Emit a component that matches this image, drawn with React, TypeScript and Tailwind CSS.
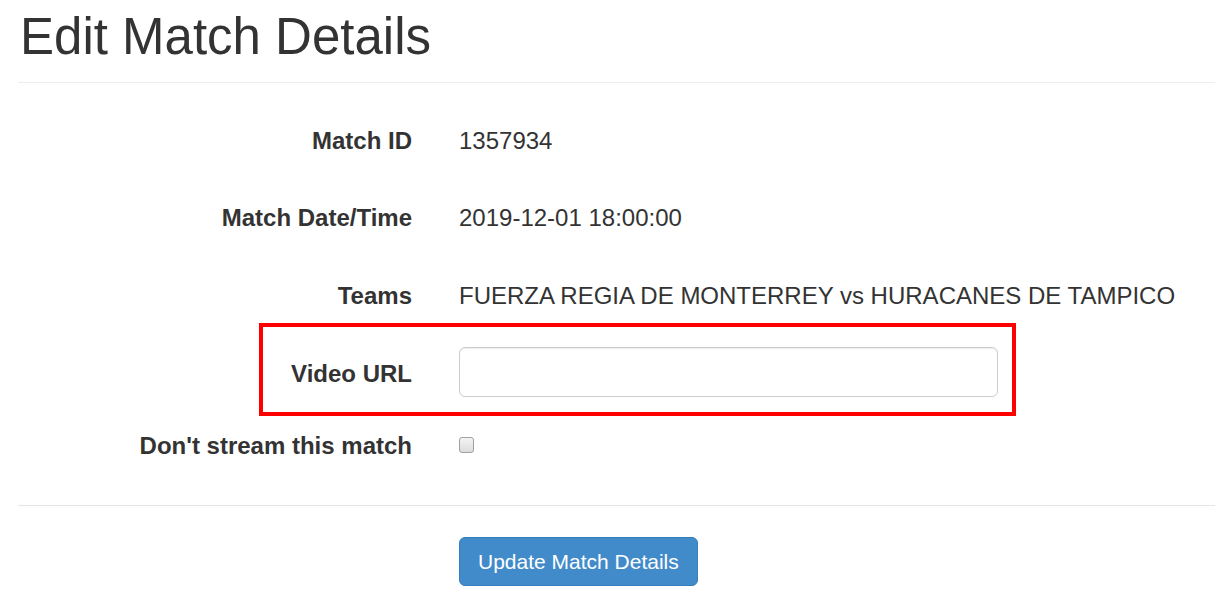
export default function App() {
  const rows = [
    { label: 'Match ID', value: '1357934', mt: 'mt-[33px]' },
    { label: 'Match Date/Time', value: '2019-12-01 18:00:00', mt: 'mt-[27px]' },
    { label: 'Teams', value: 'FUERZA REGIA DE MONTERREY vs HURACANES DE TAMPICO', mt: 'mt-[28px]' },
  ]

  return (
    <div className="min-h-screen bg-white pl-[18px] text-[#333] font-['Liberation_Sans',Arial,sans-serif] text-[24px] overflow-hidden">
      <div className="mt-[9px] pb-[17px] border-b border-[#eee]">
        <h1 className="pl-[2px] text-[51px] leading-[1.1] font-normal">Edit Match Details</h1>
      </div>

      {rows.map((row) => (
        <div key={row.label} className={`${row.mt} flex items-center h-[50px]`}>
          <div className="w-[394px] text-right font-bold">{row.label}</div>
          <div className="ml-[47px]">{row.value}</div>
        </div>
      ))}

      <div className="relative mt-[26px] flex items-center h-[50px]">
        <div className="absolute left-[241px] top-[-24px] w-[757px] h-[93px] border-[4px] border-[#ff0000]" />
        <div className="w-[394px] text-right font-bold pt-[3px]">Video URL</div>
        <input
          type="text"
          className="ml-[47px] w-[539px] h-[50px] border border-[#ccc] rounded-[6px] px-[18px] shadow-[inset_0_1px_1px_rgba(0,0,0,0.075)] outline-none"
        />
      </div>

      <div className="mt-[24px] flex items-center h-[50px]">
        <div className="w-[394px] text-right font-bold">Don't stream this match</div>
        <div className="ml-[47px] -mt-[3px] w-[15px] h-[16px] rounded-[3px] border border-[#a0a0a0] bg-gradient-to-b from-[#f4f4f4] to-[#dcdcdc]" />
      </div>

      <div className="mt-[34px] border-t border-[#e5e5e5]" />

      <div className="mt-[31px] pl-[441px]">
        <button className="h-[49px] px-[18px] rounded-[6px] bg-[#428bca] border border-[#357ebd] text-white text-[21px]">
          Update Match Details
        </button>
      </div>
    </div>
  )
}
